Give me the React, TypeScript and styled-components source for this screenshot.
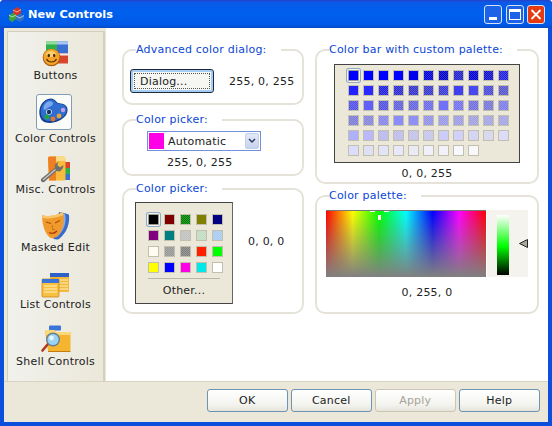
import React from "react";
import styled, { createGlobalStyle } from "styled-components";

const GlobalStyle = createGlobalStyle`
  html, body {
    margin: 0;
    padding: 0;
    background: #fff;
  }
  * {
    box-sizing: border-box;
  }
`;

const Window = styled.div`
  width: 552px;
  height: 426px;
  display: flex;
  flex-direction: column;
  background: #0b4fdc;
  border-radius: 4px 4px 0 0;
  overflow: hidden;
  font-family: "DejaVu Sans", Verdana, sans-serif;
  font-size: 11px;
  letter-spacing: 0.22px;
  line-height: 13px;
  color: #222;
`;

const TitleBar = styled.div`
  height: 28px;
  flex: none;
  display: flex;
  align-items: center;
  padding: 0 7px 0 8px;
  background: linear-gradient(#2a3fc6 0, #0a59e6 2px, #0060ee 12px, #0059e6 25px, #0a49c4 28px);
`;

const TitleText = styled.div`
  flex: 1;
  margin-left: 3px;
  color: #fff;
  font-weight: bold;
  font-size: 11.3px;
  letter-spacing: 0;
`;

const CaptionButton = styled.div<{ $close?: boolean }>`
  width: 18px;
  height: 19px;
  margin-left: 3.5px;
  border: 1px solid #d5e3fa;
  border-radius: 3px;
  background: ${(p) => (p.$close ? "#e63a10" : "#1c63e8")};
  display: flex;
  align-items: center;
  justify-content: center;
`;

const Client = styled.div`
  flex: 1;
  margin: 0 4px 4px 4px;
  display: flex;
  flex-direction: column;
  background: #ebe8d9;
  min-height: 0;
`;

const Main = styled.div`
  height: 353px;
  flex: none;
  display: flex;
`;

const SideColumn = styled.div`
  width: 102px;
  flex: none;
  padding: 3px 1px 0 3px;
`;

const SideBar = styled.div`
  height: 350px;
  padding-top: 4.5px;
  display: flex;
  flex-direction: column;
  align-items: center;
  border: 1px solid #d3d0c0;
  border-bottom: 0;
  border-right: 2px solid #d3d0c0;
  background: linear-gradient(90deg, #f1f1ec, #ebe8da);
`;

const SideItem = styled.div`
  height: 57.4px;
  flex: none;
  display: flex;
  flex-direction: column;
  align-items: center;
`;

const IconSlot = styled.div<{ $selected?: boolean }>`
  display: flex;
  align-items: center;
  justify-content: center;
  width: ${(p) => (p.$selected ? 36 : 32)}px;
  height: ${(p) => (p.$selected ? 36 : 32)}px;
  margin: 0 ${(p) => (p.$selected ? 2 : 0)}px ${(p) => (p.$selected ? 2.5 : 0)}px 0;
  ${(p) =>
    p.$selected &&
    `
    background: #fbfbf8;
    border: 1px solid #7f9db9;
    border-radius: 3px;
  `}
`;

const SideLabel = styled.div`
  white-space: nowrap;
  height: 13px;
`;

const Content = styled.div`
  flex: 1;
  background: #fff;
  padding: 15px 0 0 16px;
  display: flex;
  gap: 11px;
`;

const Column = styled.div<{ $width: number }>`
  width: ${(p) => p.$width}px;
  flex: none;
`;

const Group = styled.fieldset<{ $height: number; $top?: number }>`
  display: block;
  margin: ${(p) => p.$top ?? 0}px 0 0 0;
  padding: 0;
  min-width: 0;
  height: ${(p) => p.$height}px;
  border: 2px solid #e4e2d9;
  border-radius: 10px;
`;

const Legend = styled.legend`
  margin-left: 12px;
  padding: 0 14px 0 0;
  line-height: 14px;
  height: 14px;
  color: #0a46d6;
  white-space: nowrap;
`;

const DialogRow = styled.div`
  display: flex;
  align-items: center;
  padding: 12px 0 0 6px;
`;

const DialogButton = styled.div`
  position: relative;
  width: 84px;
  height: 24px;
  padding: 0 0 0 9px;
  display: flex;
  align-items: center;
  border: 1px solid #1c2a3c;
  border-radius: 3px;
  background: #f6f6f2;
  box-shadow: inset 0 0 0 2px #a6cdf4;

  &::after {
    content: "";
    position: absolute;
    inset: 3px;
    border: 1px dotted #555;
  }
`;

const Value = styled.div<{ $left?: number; $top?: number }>`
  margin: ${(p) => p.$top ?? 0}px 0 0 ${(p) => p.$left ?? 0}px;
  white-space: nowrap;
`;

const CenterValue = styled.div<{ $top: number }>`
  margin-top: ${(p) => p.$top}px;
  text-align: center;
  white-space: nowrap;
`;

const PickerBlock = styled.div`
  padding: 4px 0 0 23px;
`;

const Combo = styled.div`
  width: 114px;
  height: 20px;
  display: flex;
  align-items: center;
  padding: 0 1px 0 1px;
  border: 1px solid #7390dc;
  background: #fff;
`;

const ComboSwatch = styled.div`
  width: 15px;
  height: 16px;
  background: #ff00e6;
`;

const ComboText = styled.div`
  flex: 1;
  margin-left: 4px;
`;

const ComboArrow = styled.div`
  width: 14px;
  height: 16px;
  display: flex;
  align-items: center;
  justify-content: center;
  background: linear-gradient(#e4e9f6, #c6d2ee);
  border: 1px solid #c3d0ec;
  border-radius: 2px;
`;

const PopupRow = styled.div`
  display: flex;
  align-items: flex-start;
  padding: 6px 0 0 11px;
`;

const Popup = styled.div`
  width: 98px;
  height: 102px;
  padding: 11px 0 0 12px;
  background: #ebe8d9;
  border: 1px solid #444;
  border-right-color: #666;
`;

const PopupGrid = styled.div`
  display: grid;
  grid-template-columns: repeat(5, 11px);
  gap: 5px;
`;

const PopupLine = styled.div`
  width: 72px;
  height: 1px;
  margin: 5px 0 5px 0;
  background: #b9b6a6;
`;

const PopupOther = styled.div`
  width: 72px;
  text-align: center;
  line-height: 14px;
`;

const SideValue = styled.div`
  margin: 33px 0 0 15px;
  white-space: nowrap;
`;

const BarBlock = styled.div`
  padding: 7px 0 0 17px;
`;

const BarBox = styled.div`
  width: 186px;
  height: 99px;
  padding: 5px 0 0 13px;
  background: #ebe8d9;
  border: 1px solid #444;
`;

const BarGrid = styled.div`
  display: grid;
  grid-template-columns: repeat(11, 11px);
  gap: 4px;
`;

const Cell = styled.div<{ $color: string; $dither?: boolean; $selected?: boolean }>`
  width: 11px;
  height: 11px;
  border: 1px solid #c2bfae;
  background-color: ${(p) => p.$color};
  ${(p) =>
    p.$dither &&
    `background-image: repeating-conic-gradient(rgba(255,255,255,.2) 0 25%, transparent 0 50%);
     background-size: 2px 2px;`}
  ${(p) =>
    p.$selected &&
    `border-color: #9a9a90;
     border-radius: 1px;
     box-shadow: 0 0 0 1px #f2f5f8, 0 0 0 2px #8fa9c0;`}
`;

const PaletteBlock = styled.div`
  padding: 7px 0 0 9px;
  display: flex;
`;

const Spectrum = styled.div`
  position: relative;
  width: 160px;
  height: 67px;
  background-image: linear-gradient(rgba(128, 128, 128, 0), #808080),
    linear-gradient(90deg, #f00, #ff0, #0f0, #0ff, #00f, #f0f, #f00);
  border-top: 1px solid #777;
`;

const SpectrumTick = styled.div<{ $left: number; $top: number; $w: number; $h: number }>`
  position: absolute;
  left: ${(p) => p.$left}px;
  top: ${(p) => p.$top}px;
  width: ${(p) => p.$w}px;
  height: ${(p) => p.$h}px;
  background: #fff;
`;

const LumaPanel = styled.div`
  position: relative;
  width: 41px;
  height: 67px;
  margin-left: 1px;
  padding: 5px 0 0 10px;
  background: #f5f3ee;
`;

const LumaBar = styled.div`
  width: 12px;
  height: 60px;
  background: linear-gradient(#fff 0, #0f0 52%, #000 100%);
`;

const LumaArrow = styled.svg`
  position: absolute;
  right: 0;
  top: 29px;
`;

const Footer = styled.div`
  flex: 1;
  display: flex;
  justify-content: flex-end;
  gap: 2.5px;
  padding: 7px 8px 0 0;
  background: #ebe8d9;
  border-top: 1px solid #d6d3c3;
`;

const PushButton = styled.div<{ $disabled?: boolean }>`
  width: 81.5px;
  height: 23px;
  display: flex;
  align-items: center;
  justify-content: center;
  border: 1px solid ${(p) => (p.$disabled ? "#c9c6b6" : "#6d93b5")};
  border-radius: 3px;
  background: linear-gradient(#fff, #f3f3ef 70%, #e6e4da);
  color: ${(p) => (p.$disabled ? "#a6a396" : "#1c1c1c")};
`;

const barRows = [
  "#00f #00f #00f #00f #0000ee #0000d8* #0000c8* #2222cc* #0000d4* #1111cc* #2020dd*",
  "#2222ff #2a2aff #2020dd* #2a2ad0* #3333cc* #3838cc* #3a3ad8* #4040ee #4848f0 #4a4ad8* #5555cc*",
  "#5050e8* #6060f8 #5050e0* #6060dc* #6464e0* #6a6ae8* #7070f8 #7070f0* #6e6ee0* #7676d8* #7c7ce8*",
  "#7c7cd8* #8484dc* #8484ec* #8c8cf8 #9090f4 #9090e8* #9898e8* #9c9ce4* #a0a0e0* #a4a4e4* #a4a4e4*",
  "#b0b0fa #b8b8fa #b8b8ec* #bcbcec* #c0c0e8* #c4c4ec* #ccccf8 #d0d0f8 #d0d0f4* #d4d4ec* #dcdcf8",
  "#dcdcfc #dcdcf4* #e0e0f8* #e8e8fc #e8e8f4* #f0f0fc #f0f0f8* #f8f8ff #f8f8f8*",
];

const pickerColors = [
  "#000000 #800000 #008000* #808000 #000080",
  "#800080 #008080 #c0c0c0* #c0dcc0* #a6caf0*",
  "#fffbf0* #969696* #808080* #ff2000 #00ff00",
  "#ffff00 #0000ff #ff00e6 #00e8e8 #ffffff",
];

const renderCells = (rows: string[]) =>
  rows
    .join(" ")
    .split(" ")
    .map((entry, i) => (
      <Cell
        key={i}
        $color={entry.replace("*", "")}
        $dither={entry.endsWith("*")}
        $selected={i === 0}
      />
    ));

const AppIcon = () => (
  <svg width="17" height="17" viewBox="0 0 17 17">
    <path d="M5 4l4-3 4 2.5v4L9 10 5 8z" fill="#d8321e" />
    <path d="M1 9l4-2 3 2v4l-4 3-3-2z" fill="#3ea23c" />
    <path d="M8 10l4-2.5 4 2v4L12 16l-4-2z" fill="#2f6fc4" />
    <path d="M5 4l4 2 4-2.5M1 9l3 2 4-2M8 10l4 2 4-2.5" fill="none" stroke="#fff" strokeOpacity=".6" />
  </svg>
);

const ButtonsIcon = () => (
  <svg width="32" height="32" viewBox="0 0 32 32">
    <rect x="6" y="4.5" width="11" height="12" fill="#2fae4c" />
    <rect x="6" y="4.5" width="11" height="3" fill="#8fdc9c" />
    <rect x="17" y="4.5" width="11" height="12" fill="#3b6fd2" />
    <rect x="17" y="4.5" width="11" height="3" fill="#a8c4f0" />
    <rect x="17" y="16.5" width="11" height="10" fill="#d8442c" />
    <rect x="17" y="16.5" width="11" height="2" fill="#f4f0e8" />
    <circle cx="11.5" cy="20.5" r="8.8" fill="#a85a10" />
    <circle cx="11.5" cy="20" r="8" fill="#f4a428" />
    <ellipse cx="11" cy="17" rx="5" ry="3" fill="#fcd070" />
    <ellipse cx="8.8" cy="18.5" rx="1.2" ry="1.7" fill="#4a2a08" />
    <ellipse cx="14.2" cy="18.5" rx="1.2" ry="1.7" fill="#4a2a08" />
    <path d="M6.5 22c2 4 8 4 10 0" fill="none" stroke="#5a2c08" strokeWidth="1.2" />
  </svg>
);

const PaletteIcon = () => (
  <svg width="32" height="32" viewBox="0 0 32 32">
    <path d="M13 2.500c4 0 5 4 7.500 4.500s8.500 1 9 6-3 9-8 11.500-12 3.500-16 1-5-9-3.500-14 6-9 11-9z" fill="#14418f" />
    <path d="M13 3.500c3.500 0 4.500 3.500 7 4s8 1 8.500 5.500-3 8-7.500 10-11 3-14.500.8-4.500-8-3-12.500S9 3.500 13 3.500z" fill="#2f6ed0" />
    <path d="M9 6c2-1.500 6-1 6 1.500s-4 3-6 5-3.500 2-3.500-.5S7 7.500 9 6z" fill="#7aa8ec" />
    <circle cx="11" cy="16" r="2.800" fill="#fff" />
    <circle cx="11" cy="16" r="2.200" fill="#15325f" />
    <circle cx="9" cy="21" r="2.400" fill="#1fa838" />
    <circle cx="15" cy="23" r="2.400" fill="#e8742a" />
    <circle cx="21" cy="20" r="2.400" fill="#e8a43a" />
    <circle cx="25" cy="14" r="2.200" fill="#c8a0e0" />
  </svg>
);

const MiscIcon = () => (
  <svg width="32" height="32" viewBox="0 0 32 32">
    <rect x="25" y="11" width="5" height="6" fill="#d8442c" />
    <rect x="25" y="17" width="5" height="6" fill="#2fae4c" />
    <rect x="25" y="23" width="5" height="6" fill="#3b6fd2" />
    <path d="M8 7c0-1 1-1.500 2-1.500h13c1.500 0 2.500 1 2.500 2.500v20c0 1-.8 1.500-1.500 1.500H9z" fill="#f6bc3c" />
    <path d="M8 7c0-1 1-1.500 2-1.500h6V29.500H9z" fill="#ee7f24" />
    <path d="M16 5.500h7c1.500 0 2.500 1 2.500 2.500v2H16z" fill="#fadc88" />
    <path d="M18.500 10.500l-3.500 3-.2 3.500L1.500 27.500c-1.200 1.200-.6 3.500 1.500 3.800l1.200-.3L16.500 20l3.500.5 3-3.500.5-3-3.300 2.300-2.700-1.800.4-2.500z" fill="#6f6f6c" />
    <path d="M15.500 18.500L3 29" stroke="#cfcfca" strokeWidth="1.100" />
  </svg>
);

const MaskIcon = () => (
  <svg width="32" height="32" viewBox="0 0 32 32">
    <path d="M20 3c5 1 10 2 10 3 1 8-2 18-10 24-3 1.500-6-.5-6-1z" fill="#3a6cc8" />
    <path d="M26 5c2 8-1 17-8 23l-3-1c6-4 9-12 9-22z" fill="#86aeea" />
    <path d="M3 6c5 2 14 1 21-3 2 9 0 17-3 21-2 3-6 6-9 5-5-2-9-12-9-23z" fill="#f09a2c" />
    <path d="M3 6c5 2 14 1 21-3l.5 3c-7 3-15 4-21 3z" fill="#f8c66c" />
    <path d="M7 13l5 1.500M16 14l5-2.500" stroke="#a8500c" strokeWidth="1.300" fill="none" />
    <path d="M13 16l1 5 2-.5" stroke="#c8701c" fill="none" />
    <path d="M10 23.500c3 1.500 5.500 1 8-1.500" stroke="#a8380c" strokeWidth="1.300" fill="none" />
  </svg>
);

const ListIcon = () => (
  <svg width="32" height="32" viewBox="0 0 32 32">
    <rect x="11" y="7" width="19" height="19" rx="1" fill="#f4b83a" />
    <rect x="11" y="7" width="19" height="4" fill="#2f62c8" />
    <path d="M20 14h9M20 17h9M20 20h9M20 23h9" stroke="#fff1c0" />
    <rect x="3" y="13" width="17" height="18" rx="1" fill="#f8c040" stroke="#c87c10" strokeWidth=".7" />
    <rect x="3" y="13" width="17" height="4" fill="#3a74d8" />
    <path d="M5 20h13M5 23h13M5 26h13" stroke="#fff3c4" />
  </svg>
);

const ShellIcon = () => (
  <svg width="32" height="32" viewBox="0 0 32 32">
    <rect x="9" y="2.500" width="12" height="5" rx="1" fill="#3a74d8" />
    <path d="M5 7h9l2 2h14.500v19H8z" fill="#f6b52e" />
    <path d="M5 7h9l2 2h14.500v3H6z" fill="#fbd878" />
    <path d="M8 28h22.500v1H8z" fill="#c47a10" />
    <path d="M8 21L2.500 27.500" stroke="#b03a18" strokeWidth="2.600" strokeLinecap="round" />
    <circle cx="13" cy="16.500" r="7" fill="#6a7c90" />
    <circle cx="13" cy="16.500" r="5.600" fill="#9ad4f4" />
    <circle cx="11.500" cy="15" r="2.400" fill="#e4f6fd" />
  </svg>
);

const sideItems: { label: string; icon: React.ReactNode; selected?: boolean }[] = [
  { label: "Buttons", icon: <ButtonsIcon /> },
  { label: "Color Controls", icon: <PaletteIcon />, selected: true },
  { label: "Misc. Controls", icon: <MiscIcon /> },
  { label: "Masked Edit", icon: <MaskIcon /> },
  { label: "List Controls", icon: <ListIcon /> },
  { label: "Shell Controls", icon: <ShellIcon /> },
];

export default function App() {
  return (
    <>
      <GlobalStyle />
      <Window>
        <TitleBar>
          <AppIcon />
          <TitleText>New Controls</TitleText>
          <CaptionButton>
            <svg width="16" height="17" viewBox="0 0 16 17">
              <rect x="4" y="11" width="8" height="3" fill="#fff" />
            </svg>
          </CaptionButton>
          <CaptionButton>
            <svg width="16" height="17" viewBox="0 0 16 17">
              <rect x="2.500" y="3.500" width="11" height="10" fill="none" stroke="#fff" />
              <rect x="2" y="3" width="12" height="3" fill="#fff" />
            </svg>
          </CaptionButton>
          <CaptionButton $close>
            <svg width="16" height="17" viewBox="0 0 16 17">
              <path d="M3.500 4l9 9M12.500 4l-9 9" stroke="#fff" strokeWidth="1.800" />
            </svg>
          </CaptionButton>
        </TitleBar>
        <Client>
          <Main>
            <SideColumn>
              <SideBar>
                {sideItems.map((item) => (
                  <SideItem key={item.label}>
                    <IconSlot $selected={item.selected}>{item.icon}</IconSlot>
                    <SideLabel>{item.label}</SideLabel>
                  </SideItem>
                ))}
              </SideBar>
            </SideColumn>
            <Content>
              <Column $width={182}>
                <Group $height={62}>
                  <Legend>Advanced color dialog:</Legend>
                  <DialogRow>
                    <DialogButton>Dialog...</DialogButton>
                    <Value $left={15}>255, 0, 255</Value>
                  </DialogRow>
                </Group>
                <Group $height={63} $top={8}>
                  <Legend>Color picker:</Legend>
                  <PickerBlock>
                    <Combo>
                      <ComboSwatch />
                      <ComboText>Automatic</ComboText>
                      <ComboArrow>
                        <svg width="8" height="6" viewBox="0 0 8 6">
                          <path d="M1 1l3 3 3-3" fill="none" stroke="#2a3a60" strokeWidth="1.500" />
                        </svg>
                      </ComboArrow>
                    </Combo>
                    <Value $left={20} $top={5}>255, 0, 255</Value>
                  </PickerBlock>
                </Group>
                <Group $height={132} $top={6}>
                  <Legend>Color picker:</Legend>
                  <PopupRow>
                    <Popup>
                      <PopupGrid>{renderCells(pickerColors)}</PopupGrid>
                      <PopupLine />
                      <PopupOther>Other...</PopupOther>
                    </Popup>
                    <SideValue>0, 0, 0</SideValue>
                  </PopupRow>
                </Group>
              </Column>
              <Column $width={224}>
                <Group $height={141}>
                  <Legend>Color bar with custom palette:</Legend>
                  <BarBlock>
                    <BarBox>
                      <BarGrid>{renderCells(barRows)}</BarGrid>
                    </BarBox>
                  </BarBlock>
                  <CenterValue $top={4}>0, 0, 255</CenterValue>
                </Group>
                <Group $height={125} $top={5}>
                  <Legend>Color palette:</Legend>
                  <PaletteBlock>
                    <Spectrum>
                      <SpectrumTick $left={44} $top={0} $w={5} $h={1} />
                      <SpectrumTick $left={58} $top={0} $w={5} $h={1} />
                      <SpectrumTick $left={52} $top={4} $w={3} $h={5} />
                    </Spectrum>
                    <LumaPanel>
                      <LumaBar />
                      <LumaArrow width="9" height="9" viewBox="0 0 9 9">
                        <path d="M.5 4.500L8.500.5v8z" fill="#a8a898" stroke="#222" />
                      </LumaArrow>
                    </LumaPanel>
                  </PaletteBlock>
                  <CenterValue $top={9}>0, 255, 0</CenterValue>
                </Group>
              </Column>
            </Content>
          </Main>
          <Footer>
            <PushButton>OK</PushButton>
            <PushButton>Cancel</PushButton>
            <PushButton $disabled>Apply</PushButton>
            <PushButton>Help</PushButton>
          </Footer>
        </Client>
      </Window>
    </>
  );
}
